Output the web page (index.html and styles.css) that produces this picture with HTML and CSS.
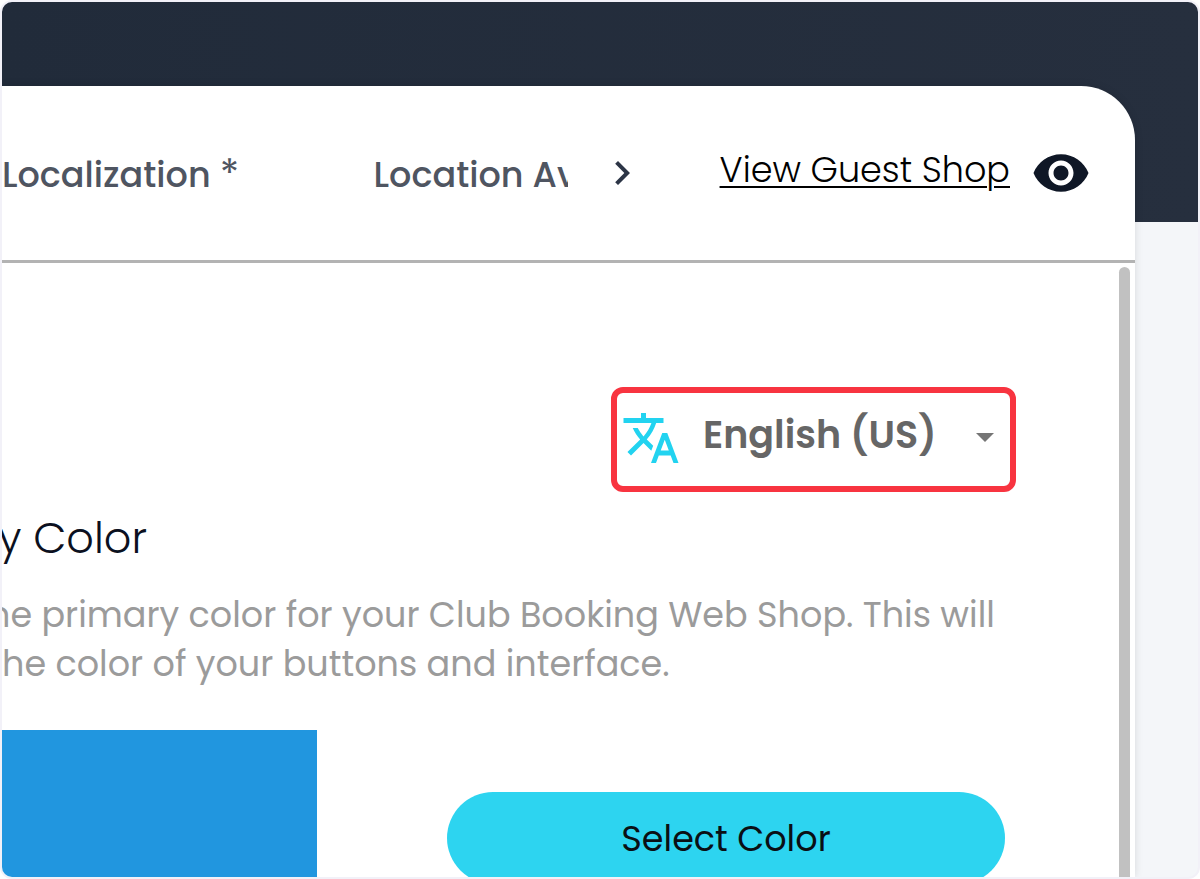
FILE: index.html
```html
<!DOCTYPE html>
<html lang="en">
<head>
  <meta charset="UTF-8" />
  <meta name="viewport" content="width=device-width, initial-scale=1" />
  <title>Web Shop Settings</title>
  <link rel="stylesheet" href="styles.css">
</head>
<body>

  <div class="frame">
    <main class="panel">

      <!-- TABS -->
      <header class="panel-header">
        <nav class="tabs">
          <a class="tab" href="#localization">Localization <span class="required">*</span></a>
          <a class="tab tab-cut" href="#location">Location Av</a>
        </nav>
        <button class="icon-btn next" type="button" aria-label="Next tabs">
          <svg viewBox="0 0 24 24" width="48" height="48"><path d="M10 6L8.59 7.41 13.17 12l-4.58 4.59L10 18l6-6z"/></svg>
        </button>
        <a class="shop-link" href="#shop">View Guest Shop</a>
        <button class="icon-btn" type="button" aria-label="Preview">
          <svg viewBox="0 0 24 24" width="60" height="60"><path d="M12 4.5C7 4.5 2.73 7.61 1 12c1.73 4.39 6 7.5 11 7.5s9.27-3.11 11-7.5c-1.73-4.39-6-7.5-11-7.5zM12 17c-2.76 0-5-2.24-5-5s2.24-5 5-5 5 2.24 5 5-2.24 5-5 5zm0-8c-1.66 0-3 1.34-3 3s1.34 3 3 3 3-1.34 3-3-1.34-3-3-3z"/></svg>
        </button>
      </header>

      <div class="panel-body">
        <div class="content">

          <!-- LANGUAGE -->
          <div class="language">
            <svg class="translate" viewBox="0 0 24 24" width="60" height="60"><path d="M12.87 15.07l-2.54-2.51.03-.03c1.74-1.94 2.98-4.17 3.71-6.53H17V4h-7V2H8v2H1v1.99h11.17C11.5 7.92 10.44 9.75 9 11.35 8.07 10.32 7.3 9.19 6.69 8h-2c.73 1.63 1.73 3.17 2.98 4.56l-5.09 5.02L4 19l5-5 3.11 3.11.76-2.04zM18.5 10h-2L12 22h2l1.12-3h4.75L21 22h2l-4.5-12zm-2.62 7l1.62-4.33L19.12 17h-3.24z"/></svg>
            <select aria-label="Language">
              <option>English (US)</option>
            </select>
            <svg class="caret" viewBox="0 0 18 9" width="18" height="9"><path d="M0 0h18l-9 9z"/></svg>
          </div>

          <!-- COLOR -->
          <h2>y Color</h2>
          <p class="hint">he primary color for your Club Booking Web Shop. This will<br>he color of your buttons and interface.</p>

          <div class="color-row">
            <div class="swatch"></div>
            <button class="select-btn" type="button">Select Color</button>
          </div>
        </div>
        <div class="scrollbar"></div>
      </div>

    </main>
  </div>

</body>
</html>
```

FILE: styles.css
```css
* {
  box-sizing: border-box;
}

body {
  margin: 0;
  background: #fff;
  font-family: Poppins, Inter, sans-serif;
}

.frame {
  height: 100vh;
  padding: 84px 63px 0 0;
  border: 2px solid #f2f1f8;
  border-radius: 12px;
  overflow: hidden;
  background: linear-gradient(90deg, #212b3a, #262f3e) top / 100% 220px no-repeat #f4f6f9;
}

.panel {
  display: flex;
  flex-direction: column;
  height: 100%;
  background: #fff;
  border-radius: 0 54px 0 0;
  box-shadow: 0 0 8px rgba(0, 0, 0, 0.12);
}

.panel-header {
  display: flex;
  align-items: center;
  height: 177px;
  flex-shrink: 0;
  padding-right: 44px;
  border-bottom: 3px solid #b3b3b3;
}

.tabs {
  display: flex;
  flex: 1;
  justify-content: space-between;
  padding-top: 4px;
}

.tab {
  color: #4f5561;
  font-size: 35px;
  font-weight: 500;
  line-height: 48px;
  text-decoration: none;
  white-space: nowrap;
}

.tab-cut {
  width: 194px;
  overflow: hidden;
}

.required {
  font-size: 40px;
  font-weight: 400;
  line-height: 1;
}

.icon-btn {
  display: flex;
  padding: 0;
  border: 0;
  background: none;
  fill: #0f1726;
  cursor: pointer;
}

.next {
  margin: 0 74px 0 30px;
  fill: #2c3546;
}

.shop-link {
  margin-right: 21px;
  padding-bottom: 6px;
  color: #000;
  font-size: 35px;
  font-weight: 300;
  line-height: 48px;
  text-decoration-thickness: 2px;
  text-underline-offset: 4px;
  white-space: nowrap;
}

.panel-body {
  display: flex;
  flex: 1;
  min-height: 0;
  padding-right: 5px;
}

.content {
  flex: 1;
  padding-top: 124px;
}

.scrollbar {
  width: 11px;
  margin-top: 4px;
  border-radius: 6px 6px 0 0;
  background: #c1c1c1;
}

.language {
  display: flex;
  align-items: center;
  width: 405px;
  height: 105px;
  margin: 0 103px 0 auto;
  padding: 0 16px 4px 4px;
  border: 6px solid #f83440;
  border-radius: 12px;
}

.translate {
  flex-shrink: 0;
  fill: #22d3f0;
}

.language select {
  flex: 1;
  min-width: 0;
  height: 60px;
  padding: 0 0 10px 22px;
  border: 0;
  appearance: none;
  background: none;
  color: #666;
  font-family: inherit;
  font-size: 38px;
  font-weight: 600;
}

.caret {
  flex-shrink: 0;
  fill: #757575;
}

h2 {
  margin: 16px 0 0;
  color: #0b1020;
  font-size: 43px;
  font-weight: 300;
  line-height: 60px;
  text-indent: -4px;
}

.hint {
  margin: 22px 0 0;
  color: #9b9b9b;
  font-size: 35px;
  line-height: 49px;
  text-indent: -14px;
  white-space: nowrap;
}

.color-row {
  display: flex;
  justify-content: space-between;
  margin: 42px 114px 0 0;
}

.swatch {
  width: 315px;
  height: 240px;
  background: #2196df;
}

.select-btn {
  width: 558px;
  height: 92px;
  margin-top: 62px;
  border: 0;
  border-radius: 46px;
  background: #2dd4f0;
  color: #0a0f14;
  font-family: inherit;
  font-size: 35px;
  cursor: pointer;
}
```
